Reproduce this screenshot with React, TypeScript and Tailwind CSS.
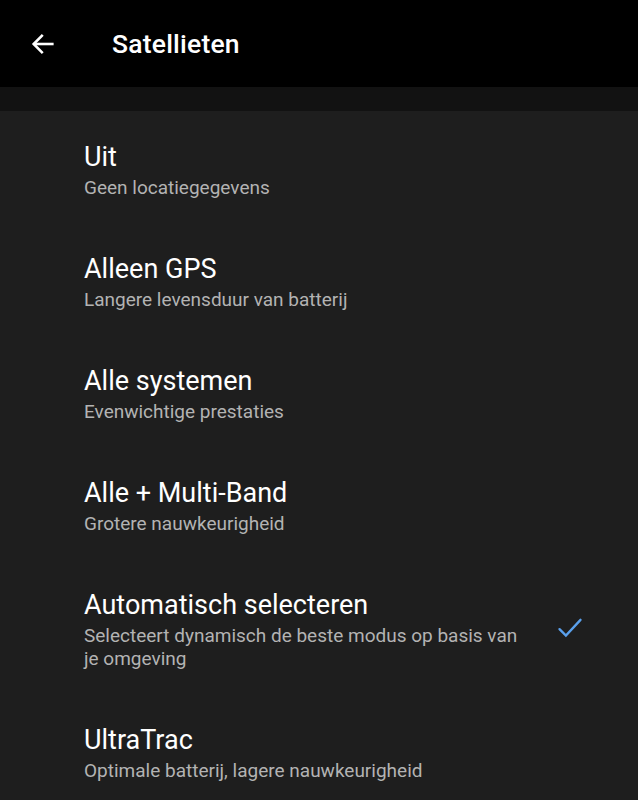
const options = [
  { title: "Uit", subtitle: "Geen locatiegegevens" },
  { title: "Alleen GPS", subtitle: "Langere levensduur van batterij" },
  { title: "Alle systemen", subtitle: "Evenwichtige prestaties" },
  { title: "Alle + Multi-Band", subtitle: "Grotere nauwkeurigheid" },
  {
    title: "Automatisch selecteren",
    subtitle: "Selecteert dynamisch de beste modus op basis van je omgeving",
    selected: true,
  },
  { title: "UltraTrac", subtitle: "Optimale batterij, lagere nauwkeurigheid" },
];

export default function App() {
  return (
    <div
      className="w-[638px] h-[800px] overflow-hidden bg-[#1e1e1e] text-white"
      style={{ fontFamily: "Roboto, 'Noto Sans', sans-serif" }}
    >
      {/* Top bar */}
      <div className="h-[87px] bg-black flex items-center">
        <button className="w-[86px] h-full flex items-center justify-center text-white">
          <svg
            width="28"
            height="28"
            viewBox="0 0 24 24"
            fill="none"
            stroke="currentColor"
            strokeWidth={2.2}
            strokeLinecap="square"
          >
            <path d="M20 12H5" />
            <path d="M11 5l-7 7 7 7" />
          </svg>
        </button>
        <h1 className="ml-[26px] text-[26.5px] font-medium tracking-[0.2px]">Satellieten</h1>
      </div>
      <div className="h-[24px] bg-[#121212]" />

      {/* Options */}
      <div>
        {options.map((o) => (
          <div
            key={o.title}
            className="flex items-center pl-[84px] pr-[54px] pt-[30px] pb-[24px]"
          >
            <div className="flex-1 max-w-[448px]">
              <div className="text-[27px] leading-[32px] text-white">{o.title}</div>
              <div className="mt-[3px] text-[19px] leading-[23px] text-[#b3b3b3]">{o.subtitle}</div>
            </div>
            {o.selected && (
              <svg
                className="ml-auto -mt-[4px]"
                width="28"
                height="28"
                viewBox="0 0 24 24"
                fill="none"
                stroke="#5aa0ec"
                strokeWidth={2}
                strokeLinecap="round"
              >
                <path d="M3 13l5.5 5.5L21 5" />
              </svg>
            )}
          </div>
        ))}
      </div>
    </div>
  );
}
